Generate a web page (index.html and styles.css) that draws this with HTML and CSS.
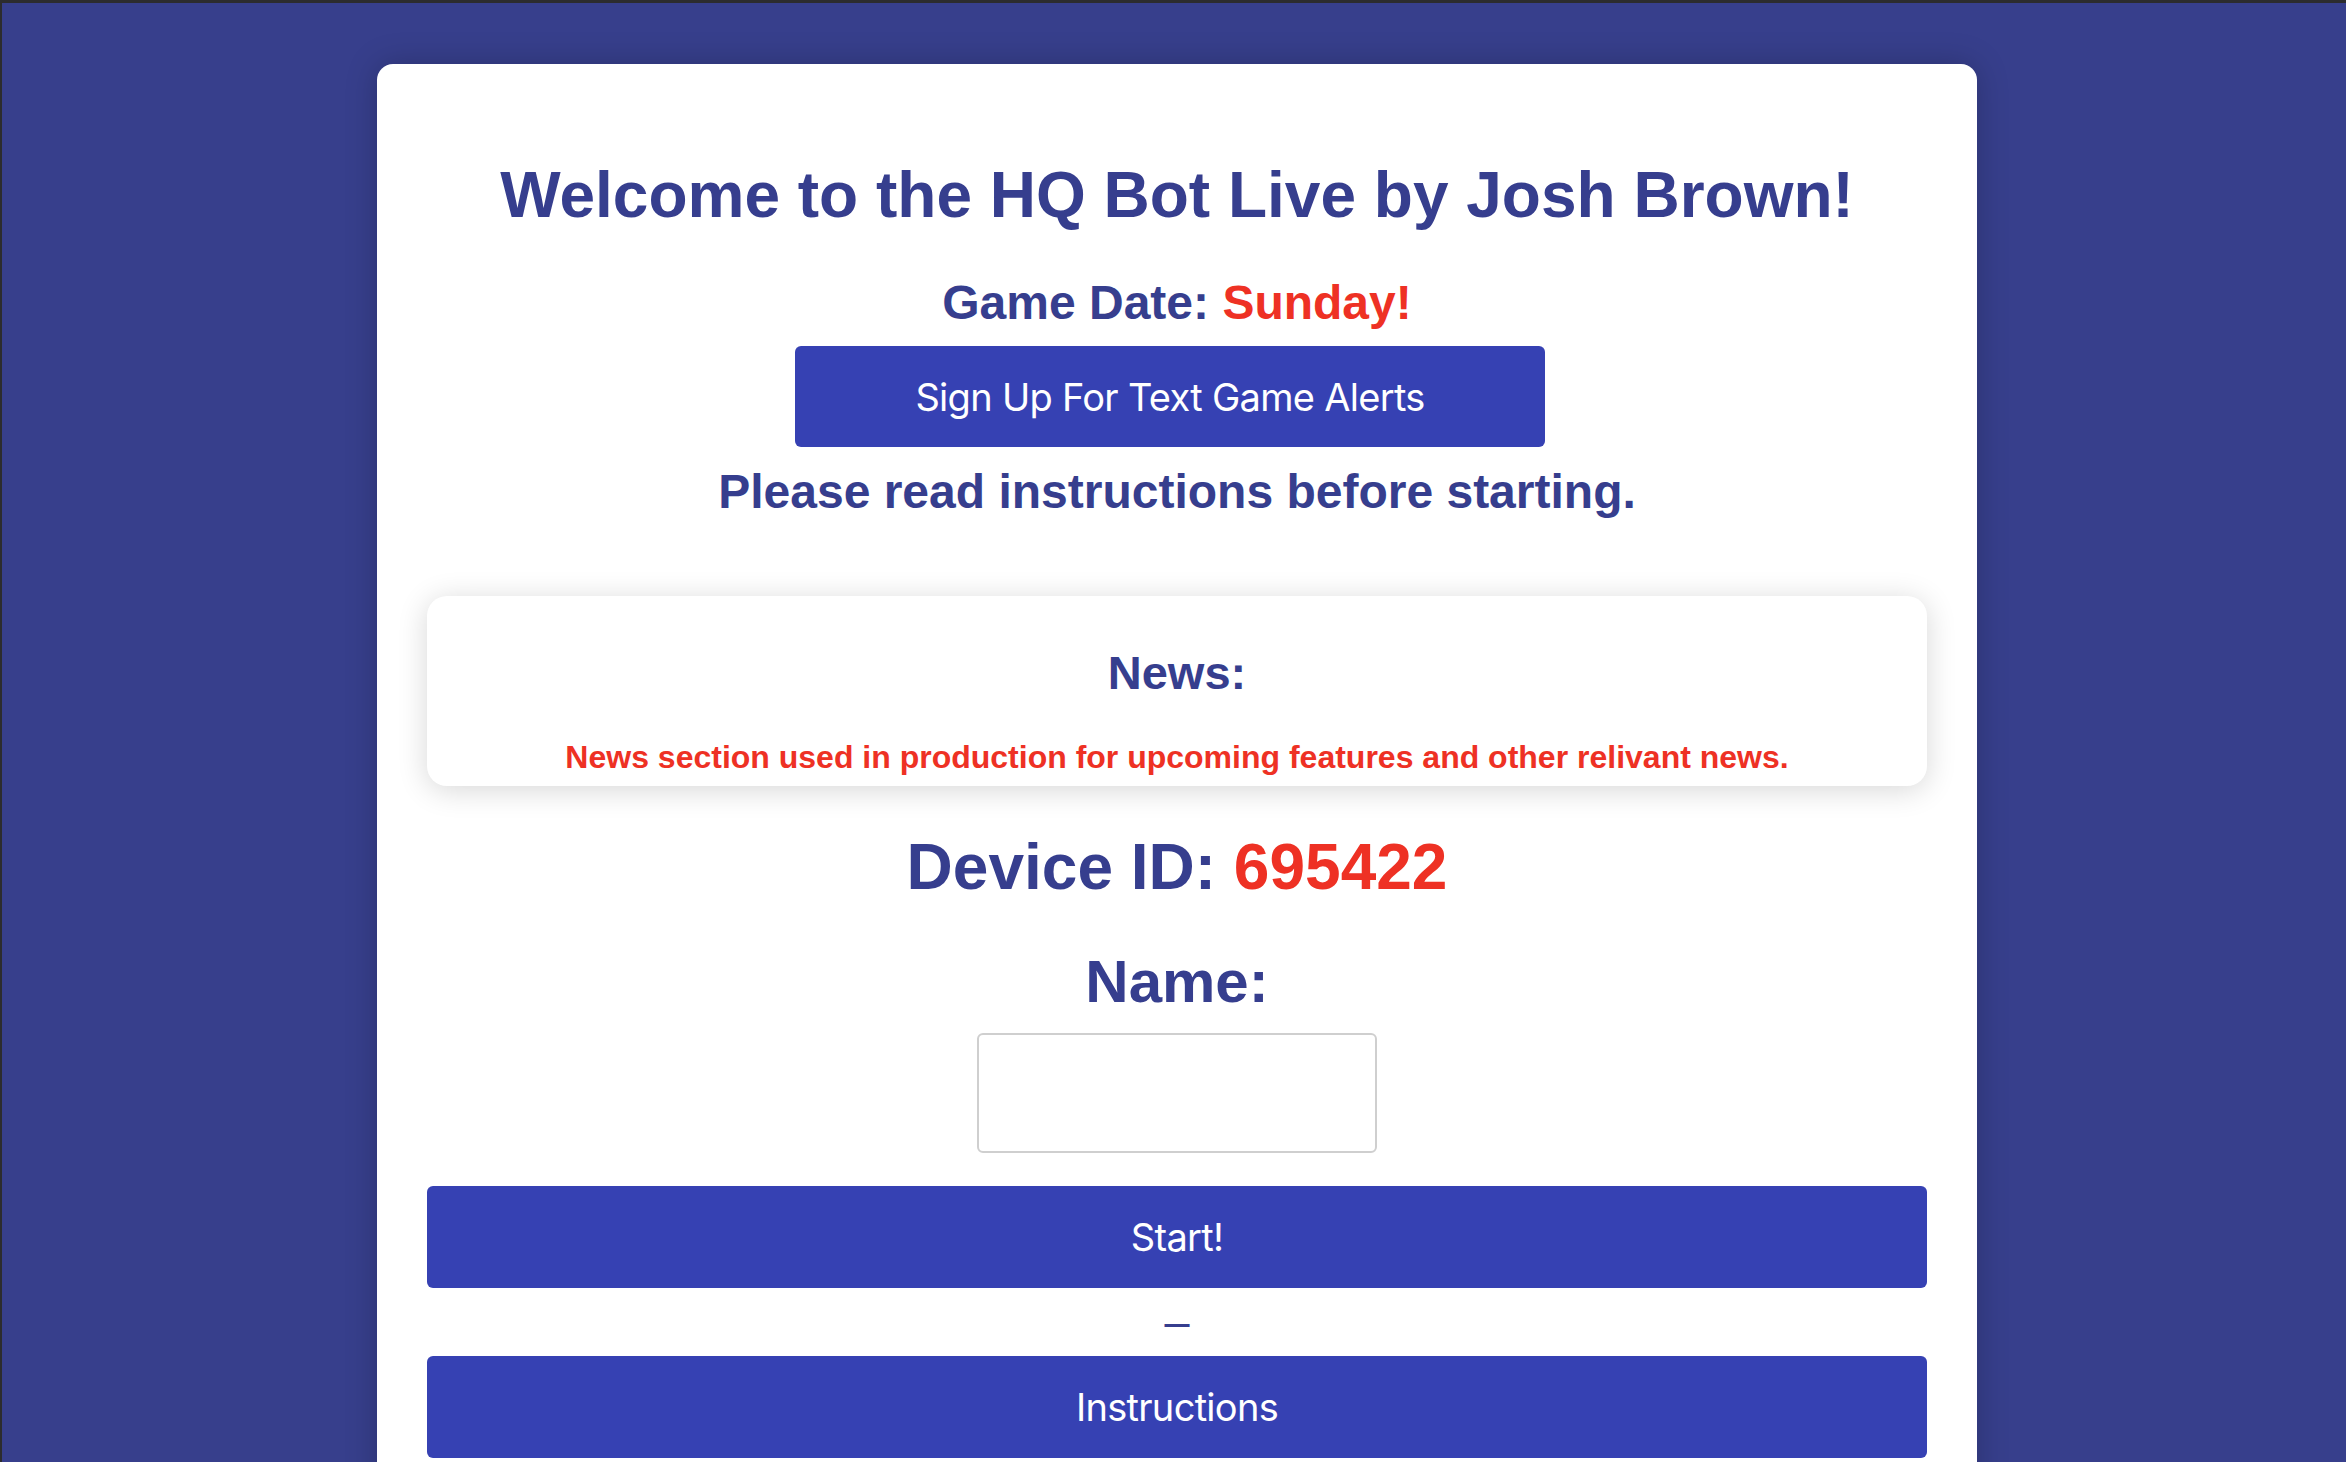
FILE: index.html
```html
<!DOCTYPE html>
<html lang="en">
<head>
<meta charset="utf-8">
<title>HQ Bot Live</title>
<link rel="stylesheet" href="styles.css">
</head>
<body>
<main class="card">
  <h1 class="title">Welcome to the HQ Bot Live by Josh Brown!</h1>
  <h2 class="game-date">Game Date: <span class="accent">Sunday!</span></h2>
  <div class="signup-row"><button class="btn btn-signup" type="button">Sign Up For Text Game Alerts</button></div>
  <h2 class="notice">Please read instructions before starting.</h2>
  <section class="news">
    <h2 class="news-title">News:</h2>
    <p class="news-text">News section used in production for upcoming features and other relivant news.</p>
  </section>
  <h1 class="device">Device ID: <span class="accent">695422</span></h1>
  <h2 class="name-label">Name:</h2>
  <div class="input-row"><input class="name-input" type="text" aria-label="Name"></div>
  <button class="btn btn-wide btn-start" type="button">Start!</button>
  <div class="sep">–</div>
  <button class="btn btn-wide" type="button">Instructions</button>
</main>
</body>
</html>
```
FILE: styles.css
```css
* {
  box-sizing: border-box;
}

html, body {
  height: 100%;
}

body {
  margin: 0;
  padding: 0 0 0 6px;
  background: #373f8c;
  border-top: 3px solid #2c2c2e;
  border-left: 2px solid #2c2c2e;
  overflow: hidden;
  font-family: "Liberation Sans", Arial, Helvetica, sans-serif;
  color: #363e8e;
}

.card {
  width: 1600px;
  margin: 61px auto 0;
  padding: 99px 50px 50px;
  background: #ffffff;
  border-radius: 16px;
  box-shadow: 0 0 32px rgba(0, 0, 0, 0.22);
  text-align: center;
}

.title,
.game-date,
.notice,
.news-title,
.news-text,
.device,
.name-label {
  margin: 0;
  line-height: 1;
  font-weight: 700;
}

.title {
  font-size: 64px;
}

.game-date {
  margin-top: 52px;
  font-size: 48px;
}

.accent {
  color: #ee3124;
}

.signup-row {
  display: flex;
  justify-content: center;
  margin-top: 19px;
}

.btn {
  display: flex;
  align-items: center;
  justify-content: center;
  border: none;
  border-radius: 6px;
  background: #3641b3;
  color: #ffffff;
  font-family: Inter, "Noto Sans", sans-serif;
  font-size: 38px;
  font-weight: 400;
  letter-spacing: -0.7px;
  padding: 0;
  cursor: pointer;
}

.btn-signup {
  width: 750px;
  height: 101px;
  margin-right: 14px;
}

.notice {
  margin-top: 21px;
  font-size: 48px;
}

.news {
  margin-top: 80px;
  padding: 53px 20px 13px;
  background: #ffffff;
  border-radius: 20px;
  box-shadow: 0 4px 30px rgba(0, 0, 0, 0.16);
}

.news-title {
  font-size: 47px;
}

.news-text {
  margin-top: 45px;
  font-size: 32px;
  color: #ee3124;
}

.device {
  margin-top: 49px;
  font-size: 64px;
}

.name-label {
  margin-top: 53px;
  font-size: 60px;
}

.input-row {
  display: flex;
  justify-content: center;
  margin-top: 21px;
}

.name-input {
  width: 400px;
  height: 120px;
  border: 2px solid #cfcfcf;
  border-radius: 6px;
  background: #ffffff;
  font-size: 32px;
  padding: 0 12px;
}

.btn-wide {
  width: 100%;
  height: 102px;
}

.btn-start {
  margin-top: 33px;
}

.sep {
  height: 68px;
  line-height: 68px;
  font-size: 45px;
  font-weight: 400;
  color: #363e8e;
}
```
